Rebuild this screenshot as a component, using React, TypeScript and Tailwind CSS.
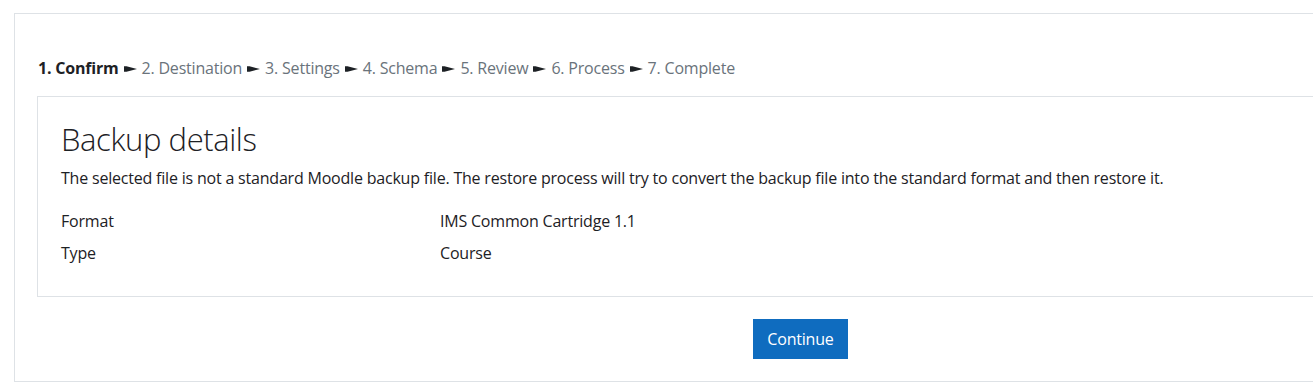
import React from "react";

const steps = ["2. Destination", "3. Settings", "4. Schema", "5. Review", "6. Process", "7. Complete"];

function Pointer() {
  return (
    <svg width="13" height="6" viewBox="0 0 13 6" className="mx-[5px] shrink-0 mt-[1px]">
      <path d="M0 0.3 H2.5 L13 3 L2.5 5.7 H0 Z" fill="#1d2125" />
    </svg>
  );
}

export default function App() {
  return (
    <div
      className="w-[1313px] h-[392px] overflow-hidden bg-white text-[#1d2125]"
      style={{ fontFamily: '"Open Sans", "Noto Sans", sans-serif' }}
    >
      <div className="ml-[14px] mt-[13px] w-[1340px] h-[369px] border-l border-t border-b border-[#dee2e6] pl-[22px] pt-[42px]">
        <div className="flex items-center text-[16px] tracking-[-0.2px] leading-[24px] h-[24px] text-[#6a737b]">
          <span className="font-bold text-[#1d2125] pl-[1px]">1. Confirm</span>
          {steps.map((s) => (
            <React.Fragment key={s}>
              <Pointer />
              <span>{s}</span>
            </React.Fragment>
          ))}
        </div>
        <div className="mt-[16px] h-[201px] border-l border-t border-b border-[#dee2e6] pl-[23px] pt-[22px]">
          <h2 className="text-[31px] tracking-[-0.4px] font-light leading-[40px]">Backup details</h2>
          <p className="mt-[7px] text-[16px] tracking-[-0.2px] leading-[24px]">
            The selected file is not a standard Moodle backup file. The restore process will try to convert the backup file into the standard format and then restore it.
          </p>
          <div className="mt-[15px] flex text-[16px] tracking-[-0.2px] leading-[32px]">
            <div className="w-[379px]">Format</div>
            <div>IMS Common Cartridge 1.1</div>
          </div>
          <div className="flex text-[16px] tracking-[-0.2px] leading-[32px]">
            <div className="w-[379px]">Type</div>
            <div>Course</div>
          </div>
        </div>
        <div className="mt-[22px] ml-[716px]">
          <button className="w-[95px] h-[40px] bg-[#0f6cbf] text-white text-[16px] tracking-[-0.2px]">Continue</button>
        </div>
      </div>
    </div>
  );
}
